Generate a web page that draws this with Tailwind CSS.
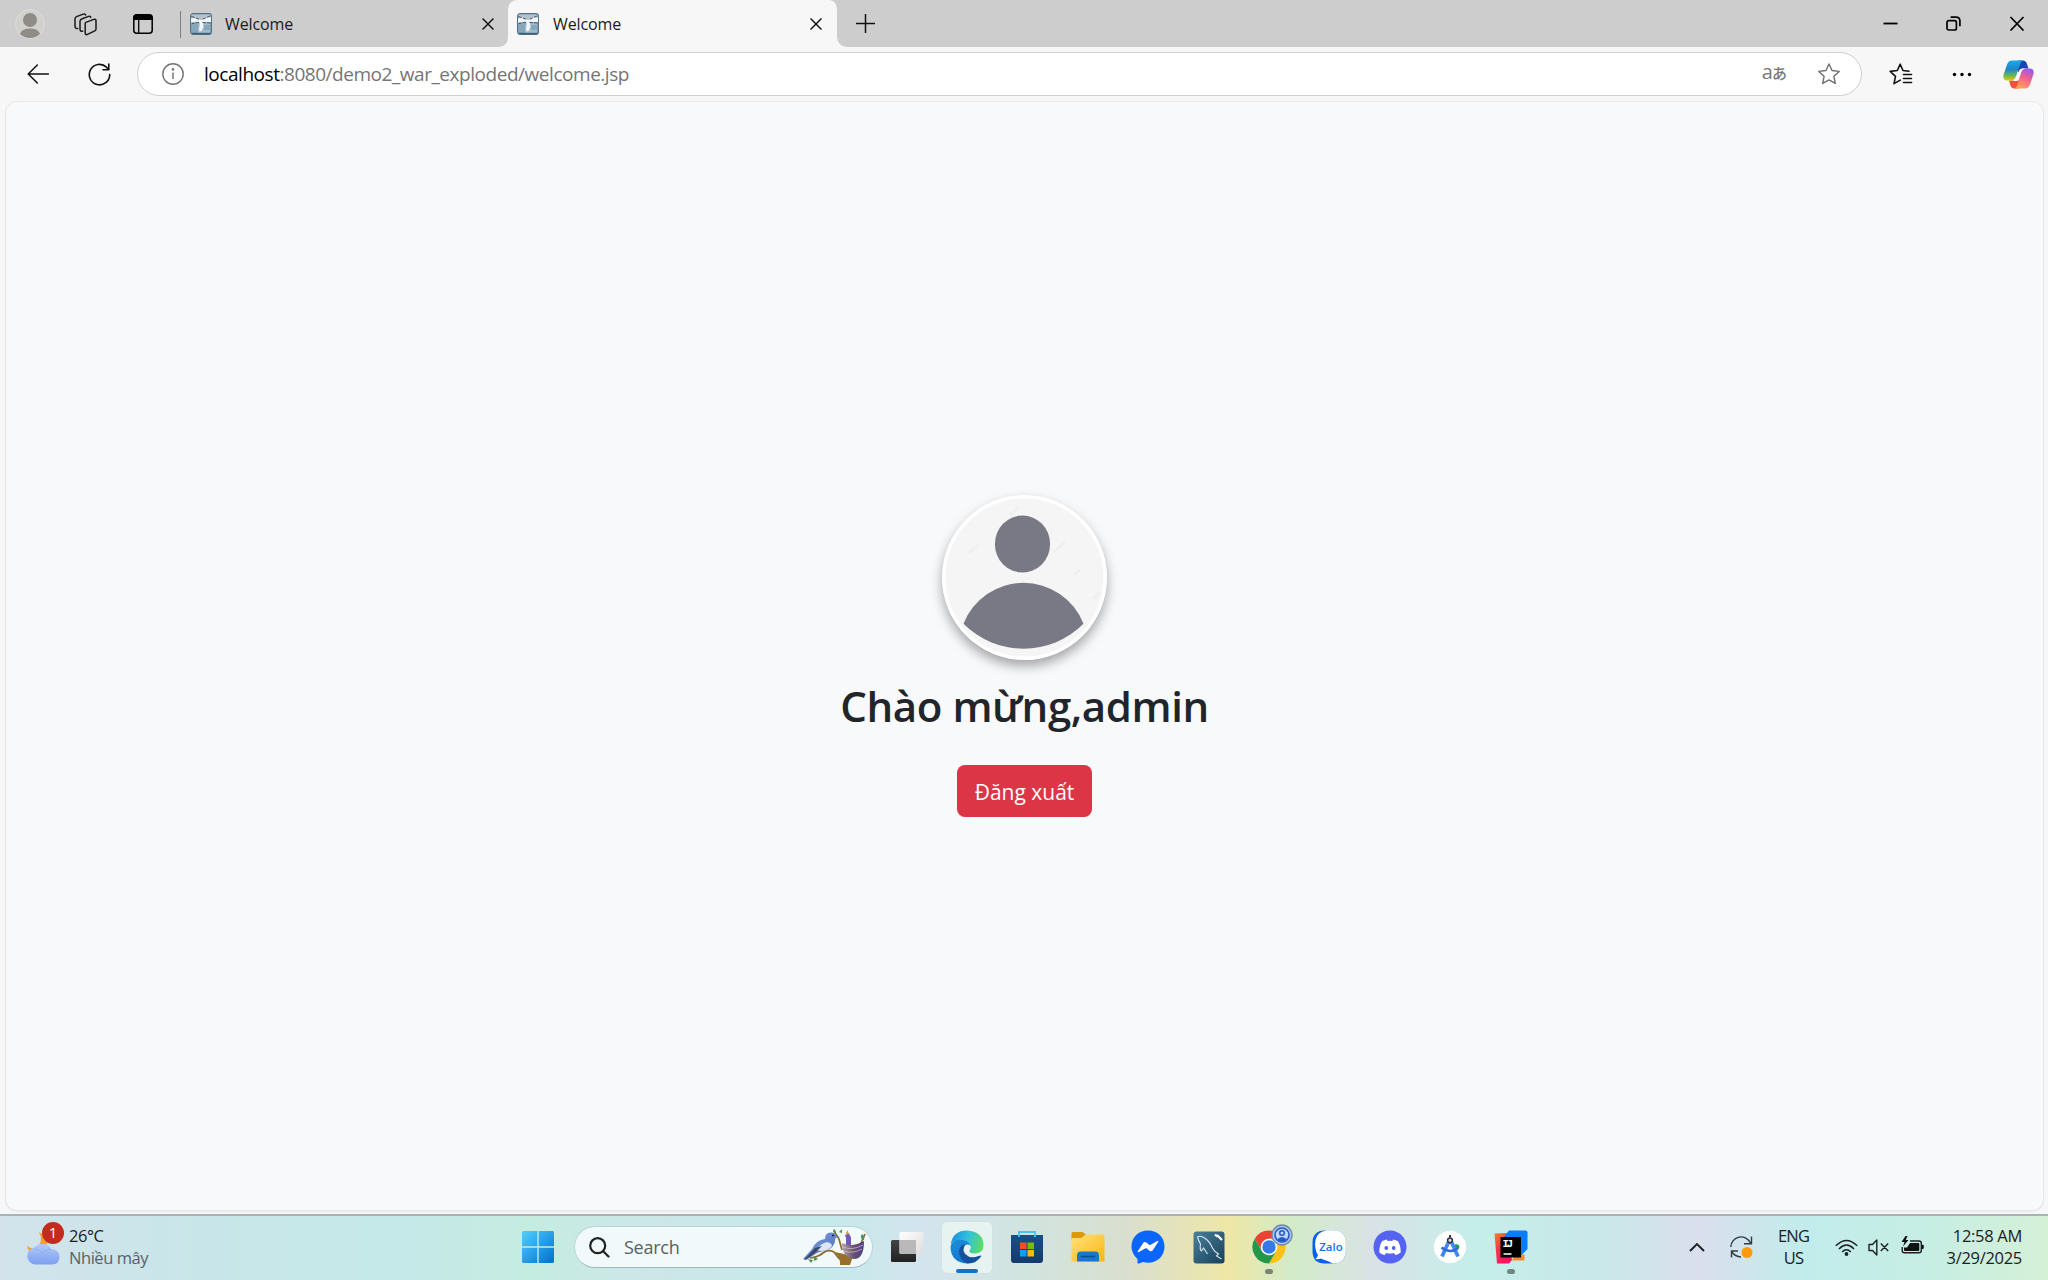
<!DOCTYPE html>
<html lang="vi">
<head>
<meta charset="utf-8">
<title>Welcome</title>
<script src="https://cdn.jsdelivr.net/npm/@tailwindcss/browser@4"></script>
</head>
<body class="w-[2048px] h-[1280px] overflow-hidden bg-[#f7f7f7] font-['Open_Sans','Noto_Sans',sans-serif] text-black flex flex-col">

<svg class="hidden">
  <defs>
    <symbol id="favicon" viewBox="0 0 22 22">
      <rect x=".7" y=".7" width="20.6" height="20.6" rx="2.5" fill="#a3bccb" stroke="#54718a" stroke-width="1.4"/>
      <path d="M1.500 11H8v9.500H1.500zM14 12h6.500v5H14z" fill="#86a8ba"/>
      <path d="M1.500 1.500h19v3L12 6 1.500 4z" fill="#b6c2ca"/>
      <path d="M1 5.500 5 4l6 3 5-3 5 .5v4.500l-7 0-1 2 .5 3-2 4-2 .5-.5-3 1-5L8 8.500 1 9.500z" fill="#f2f6f8"/>
      <path d="M1.500 3.500 10 6.500M20 3l-8 3.500M12.500 9.500l8 .5M9 9.500l-7 1" fill="none" stroke="#39546d" stroke-width="1" stroke-dasharray="3.500 1"/>
      <path d="M2 20.500h18" stroke="#3f5f77" stroke-width="1.400"/>
    </symbol>
  </defs>
</svg>

<!-- Tab strip -->
<header class="h-[47px] bg-[#cdcdcd] flex items-center shrink-0">
  <svg class="ml-[15px] mt-[1px] size-[30px]" viewBox="0 0 30 30"><defs><clipPath id="av"><circle cx="15" cy="15" r="14"/></clipPath></defs><circle cx="15" cy="15" r="14.500" fill="#d3d1cd" stroke="#dedcd8"/><g clip-path="url(#av)" fill="#8f8b87"><circle cx="15" cy="11" r="7"/><path d="M4 30c0-7 4-10.500 11-10.500S26 23 26 30z"/></g></svg>
  <svg class="ml-[29px] mt-[1px] w-[23px] h-[23px]" viewBox="0 0 23 23" fill="none" stroke="#1a1a1a" stroke-width="1.500" stroke-linejoin="round" stroke-linecap="round"><path d="M11.800 9.400 19.800 6.400Q22 5.700 22 8v8q0 1.300-1.200 1.900l-6.800 3.300Q11.200 22.500 11.200 20v-9q0-1.200.6-1.600z"/><path d="M8.700 18.200Q6 18.600 6 16V8.500Q6 6.600 7.600 6l7-2.600q1.800-.5 2.200 1"/><path d="M3.600 15.400Q1 15.800 1 13.200V6q0-1.800 1.500-2.400l6.800-2.500q1.800-.5 2.400.9"/></svg>
  <svg class="ml-[36px] mt-[1px] w-[20px] h-[20px]" viewBox="0 0 20 20"><rect x=".8" y=".8" width="18.400" height="18.400" rx="3" fill="none" stroke="#000" stroke-width="1.500"/><path d="M.5 6V3.500q0-3 3-3h13q3 0 3 3V6z"/><path d="M5.700 6v13" stroke="#000" stroke-width="1.300"/></svg>
  <div class="ml-[27px] mt-[1px] w-px h-[27px] bg-[#808080]"></div>
  <svg class="ml-[9px] mt-[1px] size-[22px]"><use href="#favicon"/></svg>
  <span class="ml-[13px] w-[257px] text-[16px] leading-[22px] tracking-[-0.1px] text-[#1b1b1b]">Welcome</span>
  <svg class="mt-[1px] size-[12px]" viewBox="0 0 11 11" stroke="#111" stroke-width="1.300"><path d="M.5.5l10 10M10.500.5l-10 10"/></svg>
  <!-- Active tab with flared lower corners -->
  <div class="ml-[5px] -mr-[10px] relative h-[47px] w-[348px] flex items-center">
    <svg class="absolute inset-0" width="348" height="47" viewBox="0 0 348 47"><path d="M0 47Q9 46 9 37V9Q10 0 19 0H329q8.500 0 9 9V37q.5 9 10 10z" fill="#f7f7f7"/></svg>
    <svg class="relative ml-[18px] mt-[1px] size-[22px]"><use href="#favicon"/></svg>
    <span class="relative ml-[14px] w-[257px] text-[16px] leading-[22px] tracking-[-0.1px] text-[#1b1b1b]">Welcome</span>
    <svg class="relative mt-[1px] size-[12px]" viewBox="0 0 11 11" stroke="#111" stroke-width="1.300"><path d="M.5.5l10 10M10.500.5l-10 10"/></svg>
  </div>
  <svg class="ml-[19px] -mt-[1px] size-[19px]" viewBox="0 0 19 19" stroke="#111" stroke-width="1.500"><path d="M9.500 0v19M0 9.500h19"/></svg>
  <div class="ml-auto mr-[23px] flex items-center">
    <svg class="w-[15px] h-[14px]" viewBox="0 0 15 14"><path d="M.5 6.500h14" stroke="#000" stroke-width="1.800"/></svg>
    <svg class="ml-[48px] w-[15px] h-[15px]" viewBox="0 0 15 15" fill="none" stroke="#000" stroke-width="1.700"><rect x="1" y="4.600" width="9.400" height="9.400" rx="1.800"/><path d="M4.600 1.200H10q3.900 0 3.900 3.900v5.200"/></svg>
    <svg class="ml-[48px] w-[16px] h-[15px]" viewBox="0 0 16 15" stroke="#000" stroke-width="1.700"><path d="M1.500 1l13 13.500M14.500 1l-13 13.500"/></svg>
  </div>
</header>

<!-- Toolbar -->
<nav class="h-[54px] bg-[#f7f7f7] flex items-center shrink-0">
  <svg class="ml-[27px] w-[22px] h-[20px]" viewBox="0 0 22 20" fill="none" stroke="#111" stroke-width="1.500" stroke-linecap="round" stroke-linejoin="round"><path d="M10.300 1 1.200 10l9.100 9M1.200 10H21.500"/></svg>
  <svg class="ml-[39px] w-[23px] h-[23px]" viewBox="0 0 23 23" fill="none" stroke="#111" stroke-width="1.600" stroke-linecap="round" stroke-linejoin="round"><path d="M21.700 11.500A10.200 10.200 0 1 1 18.500 4.200L20.500 6.500M20.800 1V6.700H15"/></svg>
  <div class="ml-[26px] w-[1725px] h-[44px] rounded-full bg-white border border-[#cfcfcf] flex items-center">
    <svg class="ml-[24px] size-[22px]" viewBox="0 0 22 22" fill="none" stroke="#747474" stroke-width="1.400"><circle cx="11" cy="11" r="10.200"/><path d="M11 9.500V16" stroke-width="1.500"/><circle cx="11" cy="6.400" r=".6" fill="#747474"/></svg>
    <span class="ml-[20px] text-[19px] leading-[26px] tracking-[-0.46px] text-[#757575] whitespace-nowrap"><span class="text-black">localhost</span>:8080/demo2_war_exploded/welcome.jsp</span>
    <span class="ml-auto -mt-[3px] flex items-baseline text-[#777] leading-none"><span class="text-[20px] leading-[20px]">a</span><span class="text-[15px] font-['Noto_Sans_CJK_JP',sans-serif] font-medium leading-[20px] -ml-px">あ</span></span>
    <svg class="ml-[31px] mr-[21px] w-[22px] h-[22px]" viewBox="0 0 22 22" fill="none" stroke="#6e6e6e" stroke-width="1.400" stroke-linejoin="round"><path d="M11 1l3 6.500 7.200.9-5.300 4.900 1.400 7.100L11 16.900l-6.300 3.500 1.400-7.100L.8 8.400 8 7.500z"/></svg>
  </div>
  <svg class="ml-[27px] w-[24px] h-[22px]" viewBox="0 0 24 22" fill="none" stroke="#111" stroke-width="1.600" stroke-linejoin="round" stroke-linecap="round"><path d="M20 8.200 14 7.500 11.200 1.200 8.300 7.500l-7.100.9 5.300 4.900L5 20.600l6.300-3.500M14.500 11.500h8M14.500 15.500h8M14.500 19.500h8" /></svg>
  <svg class="ml-[39px] mt-[1px] w-[20px] h-[5px]" viewBox="0 0 20 5"><circle cx="2.500" cy="2.500" r="1.700"/><circle cx="10" cy="2.500" r="1.700"/><circle cx="17.500" cy="2.500" r="1.700"/></svg>
  <svg class="ml-[31px] w-[31px] h-[29px]" viewBox="0 0 31 29"><defs><linearGradient id="cpA" x1="0" y1="0" x2="0" y2="1"><stop offset="0" stop-color="#16a9e8"/><stop offset=".45" stop-color="#2386c8"/><stop offset=".75" stop-color="#65b856"/><stop offset="1" stop-color="#f2c400"/></linearGradient><linearGradient id="cpB" x1=".8" y1="0" x2=".4" y2="1"><stop offset="0" stop-color="#9658f4"/><stop offset=".5" stop-color="#f3628c"/><stop offset="1" stop-color="#ffa25a"/></linearGradient></defs>
    <path d="M15 .5h5q3 0 4 3.500l1.500 4.500H20q-2 0-3 2l-2 2z" fill="#1745b8"/><path d="M16 28.500h-5q-2.500 0-3.500-3L6 20.500h5q2 0 3-2l3-3z" fill="#ee5136"/>
    <path d="M9 .5H20q-2 .5-3 4l-4 12q-1.500 4-5 4H4Q-.5 20.500.5 15L4 4.500Q5.500.5 9 .5z" fill="url(#cpA)"/><path d="M22 28.500H11q2.500-.5 3.500-4l3.500-12q1-4 5-4h4q4.500 0 3.500 5.500L27 24.500q-1.500 4-5 4z" fill="url(#cpB)"/><path d="M16.800 9.500q1-.9 3.200-1h2.500q-3.500.5-4.500 4l-2 7q-.8 1.700-3.500 1.500H9.500q2.500-.7 3.500-4.500z" fill="#fcf6f8"/></svg>
</nav>

<!-- Page -->
<main class="ml-[5px] w-[2039px] h-[1110px] shrink-0 rounded-xl bg-[#f8f9fb] border border-[#e6e7e8] shadow-[0_1px_1px_#0000000d] flex flex-col items-center">
  <svg class="mt-[393px] size-[165px] rounded-full shadow-[0_6px_12px_rgba(0,0,0,0.34)]" viewBox="0 0 165 165">
    <circle cx="82.500" cy="82.500" r="82.500" fill="#fff"/><circle cx="82.500" cy="82.500" r="79" fill="#f5f5f5"/>
    <path d="M68 20l9-8M27 58l10-9M112 57l11-10M133 79l5-4M151 104l6-6" stroke="#efefef" stroke-width="3"/>
    <ellipse cx="80.500" cy="49" rx="27.600" ry="28.500" fill="#797985"/>
    <path d="M21.500 128.700A64.500 64.500 0 0 1 141.500 128.700A84.500 84.500 0 0 1 21.500 128.700z" fill="#797985"/>
  </svg>
  <h1 class="mt-[16px] h-[60px] text-[42px] leading-[60px] font-semibold text-[#212529] tracking-[-0.4px] whitespace-nowrap">Chào mừng,admin</h1>
  <button class="mt-[29px] w-[135px] h-[52px] pt-[2px] rounded-lg bg-[#dc3545] text-white text-[21px] leading-[28px] whitespace-nowrap">Đăng xuất</button>
</main>
<div class="h-[3px] shrink-0"></div>

<!-- Taskbar -->
<footer class="h-[66px] pb-[2px] shrink-0 border-t-2 border-[#a8b3b8] bg-[linear-gradient(90deg,#d2e3eb_0%,#c8e6e9_10%,#c5e9e8_20%,#c5ece1_26%,#cde6e8_32%,#c5eaea_40%,#d3e4ee_45%,#d2e4df_50%,#d9dfcf_55%,#eee7a6_60%,#d3ebc8_63%,#d9e2e6_67%,#c5eeea_72%,#c9e8e9_78%,#dadfed_83%,#c2ecec_88%,#c6eee4_94%,#d5f0d7_100%)] flex items-center">
  <div class="ml-[25px] w-[497px] flex items-center">
    <div class="relative w-[36px] h-[44px]">
      <svg class="absolute left-0 top-[4px]" width="36" height="38" viewBox="0 0 36 38"><defs><linearGradient id="cloud" x1="0" y1="0" x2="0" y2="1"><stop offset="0" stop-color="#b0cbf8"/><stop offset="1" stop-color="#7d9ff0"/></linearGradient></defs><path d="M14 3q4 8 0 13-5 6-12 1 1 7 8 8l12-4V8z" fill="#f3a32b"/><path d="M10 35.500a8.500 8.500 0 0 1-1-16.800Q12 15 17.500 15q6.500 0 8.500 5 8.500.5 8.500 8 0 7.500-8 7.500z" fill="url(#cloud)"/><path d="M10 20q5 0 7 5 3-5 9-5" fill="none" stroke="#84a8ec" stroke-opacity=".6"/></svg>
      <span class="absolute left-[17px] top-[-3px] size-[22px] rounded-full bg-[#c42b1c] text-white text-[15px] leading-[21px] text-center">1</span>
    </div>
    <div class="ml-[8px] text-[16.500px] leading-[22px] tracking-[-0.45px]"><div class="text-[#1c2224]">26°C</div><div class="text-[#566366]">Nhiều mây</div></div>
  </div>
  <svg class="size-[32px]" viewBox="0 0 32 32"><defs><linearGradient id="win" x1="0" y1="0" x2="1" y2="1"><stop offset="0" stop-color="#4fd0ff"/><stop offset="1" stop-color="#006fd0"/></linearGradient></defs><path d="M1 0H15.300V15.300H0V1zM16.700 0H31l1 1V15.300H16.700zM0 16.700H15.300V32H1l-1-1zM16.700 16.700H32V31l-1 1H16.700z" fill="url(#win)"/></svg>
  <div class="ml-[20px] w-[299px] h-[42px] rounded-full bg-[#f1f9fa] border border-[#b9d5d8] border-b-[#9dbabe] flex items-center">
    <svg class="ml-[14px] size-[21px]" viewBox="0 0 21 21" fill="none" stroke="#222" stroke-width="2.200" stroke-linecap="round"><circle cx="8.700" cy="8.700" r="7.500"/><path d="M14.200 14.200l5.300 5.300"/></svg>
    <span class="ml-[14px] w-[178px] text-[18px] leading-[24px] tracking-[-0.25px] text-[#5a5f60]">Search</span>
    <svg class="w-[66px] h-[38px]" viewBox="0 0 66 38"><defs><linearGradient id="bird" x1="0" y1="0" x2="1" y2="1"><stop offset="0" stop-color="#7fa6ea"/><stop offset="1" stop-color="#4b61b0"/></linearGradient><linearGradient id="nest" x1="0" y1="0" x2="1" y2="0"><stop offset="0" stop-color="#b2a3ac"/><stop offset=".55" stop-color="#66516e"/><stop offset="1" stop-color="#4c3c8e"/></linearGradient></defs>
      <path d="M8 30q8-1 13-5t11-1q4 6 8 9l8-2q8-3 9-11l6-14M40 22 37 11 32 3" fill="none" stroke="#8c6a2e" stroke-width="1.700"/><path d="M33 24q6 7 5 13h10l3-9z" fill="#99702b"/>
      <path d="M1 31 10 21Q14 12 23 11 23 4 29.500 4.500q4.500.5 5 4l3.500 0-4.500 1.500Q33 21 22 23q-7 1-10 4l-8 5z" fill="url(#bird)"/><path d="M14 22q5-7 11-8 5 1 5 4-4 5-11 5z" fill="#dbe7f5"/><path d="M2 32 13 20l7-2-6 6-9 7z" fill="#3b4864"/><circle cx="31" cy="7.500" r=".9" fill="#111"/>
      <path d="M40 15q10 5 22-2 0 18-10 18-12-2-12-16z" fill="url(#nest)"/><path d="M41 19q9 4 20-2M42 23q9 3 18-2" stroke="#d7c7cf" stroke-width=".7" fill="none"/><path d="M44 17V10l-1-3 4-1.500 2 4v8z" fill="#7259b8"/><path d="M43.500 6l2-4 1.500 4z" fill="#e79b3d"/>
      <path d="M33 6q-3-3-1-5 3 2 1 5M37 4l3-3v4zM60 12q-2-4 0-6 3 2 2 6M12 28l4 3-4 2zM6 31l5 1-2 3z" fill="#479655"/></svg>
  </div>

  <!-- Pinned and running apps -->
  <div class="ml-[3.500px] h-full grid grid-cols-[repeat(11,60.4px)] items-center justify-items-center">
    <svg class="size-[34px] -mt-px" viewBox="0 0 34 34"><defs><linearGradient id="tvA" x1="0" y1="0" x2="0" y2="1"><stop offset="0" stop-color="#444"/><stop offset="1" stop-color="#222"/></linearGradient><linearGradient id="tvB" x1="0" y1="0" x2="1" y2="1"><stop offset="0" stop-color="#fff"/><stop offset="1" stop-color="#dcdcdc"/></linearGradient></defs><rect x="1" y="10" width="25" height="22" rx="1.500" fill="url(#tvA)"/><rect x="9.500" y="2" width="24" height="22" rx="1.500" fill="url(#tvB)"/><path d="M9.500 10H26v14H11q-1.500 0-1.500-1.500z" fill="#b9b9b9"/></svg>
    <div class="relative w-[52px] h-[53px] rounded-md bg-[#e7f3f1] border border-[#d3e2e0] flex justify-center">
      <svg class="mt-[8px] size-[34px]" viewBox="0 0 34 34"><defs><linearGradient id="eG" x1="0" y1=".3" x2="1" y2=".5"><stop offset="0" stop-color="#1a8edb"/><stop offset=".5" stop-color="#2fc2df"/><stop offset="1" stop-color="#5fdb62"/></linearGradient><linearGradient id="eB" x1="0" y1="0" x2=".4" y2="1"><stop offset="0" stop-color="#1b8fda"/><stop offset="1" stop-color="#1478d0"/></linearGradient></defs>
        <path d="M.8 14Q3 .5 17 .5q16 1 16.500 14.500 0 8.500-9 8.500-6 0-5-3 2.500-3 0-6Q16 9 9 10 3 11 .8 14z" fill="url(#eG)"/>
        <path d="M.5 17Q1 10 10 9.500q8 0 10.500 6-5-3-7 2-2 8 4.500 16Q1 33 .5 17z" fill="url(#eB)"/>
        <path d="M9 21q1-6 6.500-6.800-4 5.500 0 10 5 5 13 1.800 3-1.200 2.700.2Q26 34 17.500 33.500 9 30 9 21z" fill="#12519c"/></svg>
      <span class="absolute bottom-0 left-[14px] w-[22px] h-[4px] rounded-full bg-[#0f74cf]"></span>
    </div>
    <svg class="size-[34px]" viewBox="0 0 34 34"><defs><linearGradient id="st" x1="0" y1="0" x2="0" y2="1"><stop offset="0" stop-color="#175088"/><stop offset="1" stop-color="#163a6c"/></linearGradient></defs><path d="M1 5h32v25q0 3-3 3H4q-3 0-3-3z" fill="url(#st)"/><path d="M9 7V2h16v5" fill="none" stroke="#48c4ef" stroke-width="1.800"/><path fill="#f25022" d="M10 12.500h6.500V19H10z"/><path fill="#7fba00" d="M17.500 12.500H24V19h-6.500z"/><path fill="#00a4ef" d="M10 20h6.500v6.500H10z"/><path fill="#ffb900" d="M17.500 20H24v6.500h-6.500z"/></svg>
    <svg class="size-[34px]" viewBox="0 0 34 34"><defs><linearGradient id="fo" x1="0" y1="0" x2="1" y2="1"><stop offset="0" stop-color="#ffe27a"/><stop offset="1" stop-color="#fbb615"/></linearGradient></defs><path d="M.5 10V3.500q0-1.500 1.500-1.500h9.500L15 4.500l-3 4z" fill="#dc9a0a"/><path d="M.5 8h10l4-3.500h17q2 0 2 2V31.500H.5z" fill="url(#fo)"/><path d="M6 31.500v-6q0-4 4-4h14q4 0 4 4v6z" fill="#1879c8"/><path d="M10.500 26.500h13" stroke="#0d4c8a" stroke-width="1.600" stroke-linecap="round"/></svg>
    <svg class="size-[34px]" viewBox="0 0 34 34"><path d="M17 .5C7.500.5.500 7 .5 16.500.5 21.500 3 26 6.500 29v3.500q0 1.500 1.500 1L12 32q2.500.8 5 .8c9.500 0 16.500-7 16.500-16.300S26.500.5 17 .5z" fill="#0a66ff"/><path d="M6.800 21.300 12 13.200q1.300-2 3.300-.6l3.500 2.700 7.500-4.300q1.500-.5 1 .8l-5.500 8.400q-1.300 1.800-3.300.5l-3.400-2.700-7.200 4.100q-1.500.6-1.100-.8z" fill="#fff"/></svg>
    <svg class="w-[32px] h-[33px]" viewBox="0 0 32 33"><defs><linearGradient id="my" x1="0" y1="0" x2="1" y2="1"><stop offset="0" stop-color="#4a819c"/><stop offset="1" stop-color="#17405b"/></linearGradient></defs><rect x=".5" y=".5" width="31" height="32" rx="3" fill="url(#my)"/><path d="M4.500 6q3-2 7 1 5 3 8 10 2 4 6 6l-2 2 5 3M4.500 6q1 4 3 7-1 5 1 7l2-3 4 6" fill="none" stroke="#dce8ef" stroke-width="1.100"/><path d="M22 3.500l2.500 2.300M24 4l5 5" stroke="#fff" stroke-width="2.200"/></svg>
    <div class="relative w-[34px] h-full flex items-center">
      <svg class="size-[34px]" viewBox="0 0 34 34"><path d="M17 .5A16.500 16.500 0 0 1 31.300 8.700H17L9.800 21.200 2.700 8.700A16.500 16.500 0 0 1 17 .5z" fill="#ea4335"/><path d="M31.300 8.700A16.500 16.500 0 0 1 17 33.500L24.200 21.100 17 8.700z" fill="#fbc116"/><path d="M2.700 8.700 9.800 21.200Q17 28 24.200 21.100L17 33.500A16.500 16.500 0 0 1 2.700 8.700z" fill="#23974a"/><circle cx="17" cy="17" r="8.300" fill="#fff"/><circle cx="17" cy="17" r="6.700" fill="#3379ea"/></svg>
      <svg class="absolute left-[19px] top-[8px]" width="22" height="22" viewBox="0 0 22 22"><circle cx="11" cy="11" r="10" fill="#a9c7fb" stroke="#718a9d" stroke-width="1.300"/><circle cx="11" cy="11" r="7" fill="#bdd5ff" stroke="#245bc8" stroke-width="1.600"/><circle cx="11" cy="9" r="2.300" fill="none" stroke="#245bc8" stroke-width="1.500"/><path d="M6 15.500q5-5 10 0-5 4.500-10 0z" fill="#245bc8"/></svg>
      <span class="absolute left-[13px] top-[53px] w-[8px] h-[5px] rounded-full bg-[#7c8478]"></span>
    </div>
    <svg class="size-[34px]" viewBox="0 0 34 34"><path d="M13 .5h8Q33.500.5 33.500 13v8q0 12.500-12.500 12.500h-8Q.5 33.500.5 21v-8Q.5.500 13 .5z" fill="#0a5ef0"/><path d="M14 .5h7Q33.500.5 33.500 13v8q0 9-9.500 9.500-10 1-15-2-3 1-5.500.500 2-1.500 2.500-4-4-6-2.500-15Q5 2 14 .5z" fill="#fff"/><path d="M14 .5h7Q33.500.5 33.500 13v8q0 12.500-12.500 12.500L9 28z" fill="#fff"/><text x="19" y="20.500" font-family="Open Sans, sans-serif" font-weight="600" font-size="11.500" fill="#1570f0" text-anchor="middle" textLength="23.500" lengthAdjust="spacingAndGlyphs">Zalo</text></svg>
    <svg class="size-[34px]" viewBox="0 0 34 34"><circle cx="17" cy="17" r="16.500" fill="#5562f2"/><path d="M13.700 9.500 9.200 11Q6 16 6.300 22.500q2.500 2 5.500 2.500l1.200-2q4 1 8 0l1.200 2q3 -.5 5.500-2.500.3-6.500-2.900-11.500l-4.500-1.500-1 1.500q-2.300-.4-4.600 0z" fill="#fff"/><ellipse cx="13.300" cy="18" rx="1.900" ry="2.100" fill="#5562f2"/><ellipse cx="20.700" cy="18" rx="1.900" ry="2.100" fill="#5562f2"/></svg>
    <svg class="size-[34px]" viewBox="0 0 34 34"><circle cx="17" cy="17" r="14.800" fill="#fff"/><circle cx="17" cy="17" r="14.800" fill="none" stroke="#fff" stroke-width="2.800" stroke-dasharray="5 2.750" stroke-linecap="round"/><circle cx="23.500" cy="17" r="2.800" fill="#209a52"/><path d="M16 11 9 26.500M18 11l7 15.500" stroke="#4387f0" stroke-width="3.800"/><path d="M8.500 17.500q8.500 6.500 16 1" fill="none" stroke="#2f6bd6" stroke-width="2.400"/><circle cx="17" cy="10.300" r="2.400" fill="#ddd" stroke="#2b3440" stroke-width="1.500"/><path d="M17 5v2.500" stroke="#2b3440" stroke-width="2"/></svg>
    <div class="relative w-[34px] h-full flex items-center">
      <svg class="size-[34px]" viewBox="0 0 34 34"><defs><linearGradient id="ij" x1="0" y1="0" x2=".5" y2="1"><stop offset="0" stop-color="#f58220"/><stop offset=".5" stop-color="#f4364c"/><stop offset="1" stop-color="#ff1462"/></linearGradient></defs><path d="M30.500 30.500H18l3-6h9.500z" fill="#f68b2d"/><path d="M.5 3.500 13 3l5 27-3 3.500H3z" fill="url(#ij)"/><path d="M15 .5h16.500q2 0 2 2V19L27 25.500H13L10.500 6z" fill="#087cfa"/><path d="M6.500 7h20.500v20.500H6.500z"/><text x="8.500" y="17" font-family="Liberation Mono, monospace" font-weight="700" font-size="10.500" fill="#fff" textLength="10.500">IJ</text><path d="M9.500 24h8" stroke="#fff" stroke-width="1.500"/></svg>
      <span class="absolute left-[13px] top-[53px] w-[8px] h-[5px] rounded-full bg-[#728680]"></span>
    </div>
  </div>

  <!-- System tray -->
  <div class="ml-auto mr-[26px] flex items-center text-[16.500px] leading-[22px] tracking-[-0.3px] text-[#1b2023]">
    <svg class="w-[16px] h-[10px]" viewBox="0 0 16 10" fill="none" stroke="#1b2023" stroke-width="1.900"><path d="M1 9l7-7 7 7"/></svg>
    <svg class="ml-[25px] w-[23px] h-[24px]" viewBox="0 0 23 24" fill="none" stroke="#333b3e" stroke-width="1.400"><path d="M.8 12A10.300 10.300 0 0 1 20.500 8M21.500 1.500V8.800H14M1.500 22.500V16H8M2 17q3 4.500 9 5"/><circle cx="17" cy="17.500" r="5.500" fill="#ff9a0c" stroke="none"/></svg>
    <div class="ml-[23px] w-[35px] text-center whitespace-nowrap tracking-[-0.8px]"><div>ENG</div><div>US</div></div>
    <svg class="ml-[24px] w-[23px] h-[17px]" viewBox="0 0 23 17" fill="none" stroke="#1b2023" stroke-width="1.500"><path d="M.8 6.800q10.700-10.800 21.400 0M4 10q7.500-7.800 15 0M7.200 13q4.300-4.500 8.600 0"/><circle cx="11.500" cy="15" r="1.900" fill="#1b2023" stroke="none"/></svg>
    <svg class="ml-[10px] w-[21px] h-[17px]" viewBox="0 0 21 17" fill="none" stroke="#1b2023" stroke-width="1.400" stroke-linejoin="round"><path d="M1 5.500H4.500L8.800 1V16L4.500 11.500H1zM12.800 4.500l7.400 7.500M20.200 4.500l-7.400 7.500"/></svg>
    <svg class="ml-[12px] -mt-[3px] w-[23px] h-[19px]" viewBox="0 0 23 19"><path d="M9 5h9q2.300 0 2.300 2.300v7.200q0 2.300-2.300 2.300H3.500q-2.300 0-2.300-2.300V11" fill="none" stroke="#1b2023" stroke-width="1.400"/><path d="M9 7h8.300q1 0 1 1v6q0 1-1 1H4q-1 0-1-1v-2.500h3z" fill="#111"/><path d="M21 8.500l1.800.7v3.400l-1.800.7zM4.500 0 .5 6h3L2 10.500 7.500 4H4.800L6.500 0z" fill="#111"/></svg>
    <div class="ml-[20px] w-[78px] text-right whitespace-nowrap"><div>12:58 AM</div><div>3/29/2025</div></div>
  </div>
</footer>
</body>
</html>
